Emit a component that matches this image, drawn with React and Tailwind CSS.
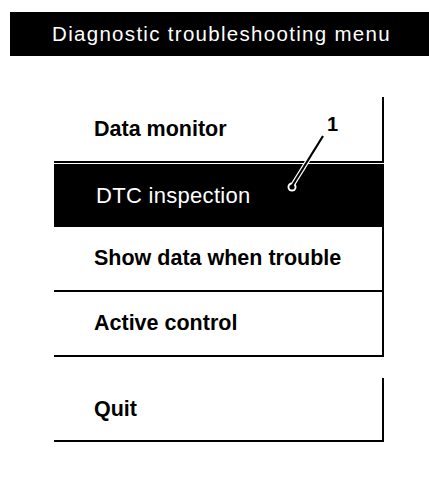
import React from "react";

const items = [
  { label: "Data monitor", h: "h-[66px]" },
  { label: "DTC inspection", selected: true },
  { label: "Show data when trouble", h: "h-[65px]" },
  { label: "Active control", h: "h-[65px]" },
];

const MenuRow = ({ label, selected, h }) =>
  selected ? (
    <div className="mt-[1px] h-[63px] bg-black flex items-center pl-[42px] text-white text-[22px] tracking-[0.3px] font-normal">
      {label}
    </div>
  ) : (
    <div className={`${h} flex items-center pl-[40px] border-b-2 border-r-2 border-black text-black text-[21.5px] font-bold`}>
      {label}
    </div>
  );

const App = () => {
  return (
    <div
      className="w-[429px] h-[484px] bg-white overflow-hidden"
      style={{ fontFamily: '"Liberation Sans", Arial, sans-serif' }}
    >
      {/* header */}
      <div className="mt-[12px] ml-[10px] h-[44px] bg-black flex items-center justify-center">
        <span className="text-white text-[20.5px] tracking-[1.3px] leading-none pl-[4px]">
          Diagnostic troubleshooting menu
        </span>
      </div>

      {/* menu */}
      <div className="relative ml-[54px] w-[330px] mt-[41px]">
        {items.map((it) => (
          <MenuRow key={it.label} {...it} />
        ))}

        <div className="mt-[21px] h-[64px] flex items-center pl-[40px] border-b-2 border-r-2 border-black text-black text-[21.5px] font-bold">
          Quit
        </div>

        {/* callout */}
        <svg
          className="absolute left-0 top-0 pointer-events-none"
          width="330"
          height="120"
          viewBox="0 0 330 120"
        >
          <text
            x="273"
            y="34"
            fontSize="20"
            fontWeight="bold"
            fill="#000"
            fontFamily="Liberation Sans, Arial, sans-serif"
          >
            1
          </text>
          <line x1="269" y1="39" x2="238" y2="89" stroke="#fff" strokeWidth="4.5" />
          <circle cx="238" cy="90" r="4.5" fill="#fff" />
          <line x1="269" y1="39" x2="238" y2="89" stroke="#000" strokeWidth="2.2" />
          <circle cx="238" cy="90" r="2.6" fill="#000" />
        </svg>
      </div>
    </div>
  );
};

export default App;
